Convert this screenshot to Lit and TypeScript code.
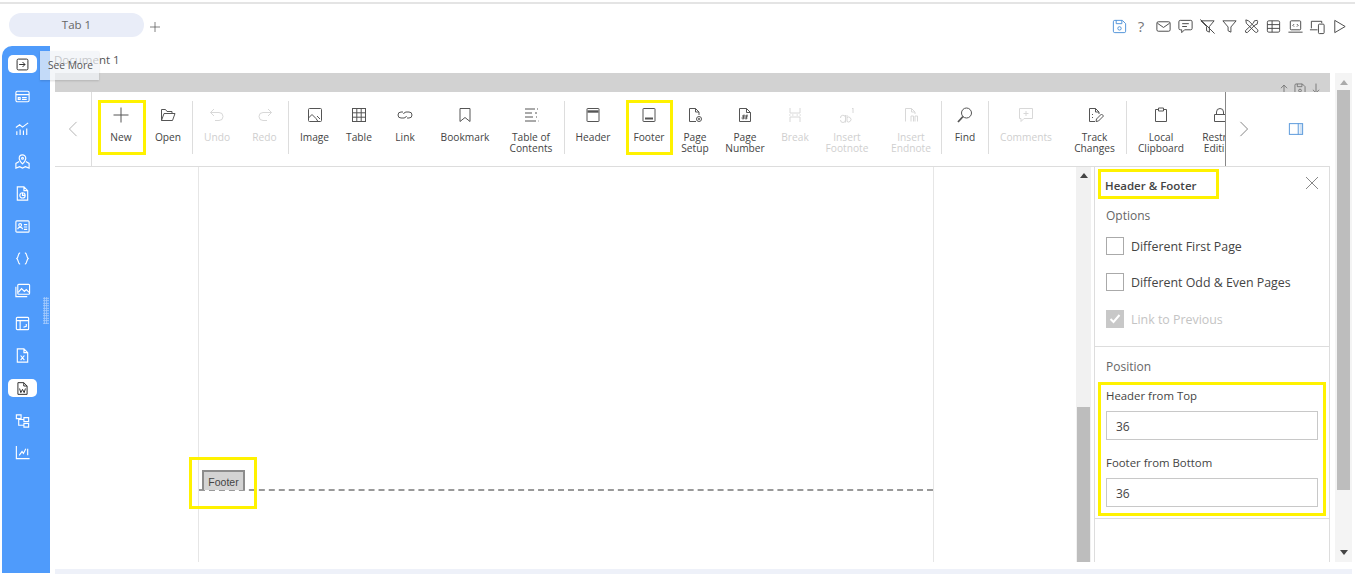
import { LitElement, html, svg, css } from "lit";
import { customElement } from "lit/decorators.js";

// icon bodies, all on an 18x18 box, stroked with currentColor
const icons: Record<string, any> = {
  plus: svg`<path d="M9 1.5v15M1.5 9h15"/>`,
  open: svg`<path d="M2.5 14.5V3.5h4l1.5 2h5v2M2.5 14.5l2.5-7h11l-2.5 7z"/>`,
  undo: svg`<path d="M6 3 2.5 6.5 6 10M2.5 6.5H11a4 4 0 0 1 0 8H7"/>`,
  redo: svg`<path d="M12 3l3.5 3.5L12 10M15.5 6.5H7a4 4 0 0 0 0 8h4"/>`,
  image: svg`<rect x="2.5" y="2.5" width="13" height="13" rx="1"/><path d="M2.5 12 6 8.5l4 4 2 3M11 10l3 3"/>`,
  table: svg`<rect x="2.5" y="2.5" width="13" height="13"/><path d="M2.5 6.8h13M2.5 11.2h13M6.8 2.5v13M11.2 2.5v13"/>`,
  link: svg`<path d="M7 6H5a3 3 0 0 0 0 6h3a3 3 0 0 0 2.5-2M11 12h2a3 3 0 0 0 0-6h-3a3 3 0 0 0-2.5 2"/>`,
  bookmark: svg`<path d="M4 2.5h10v13L9 11.5l-5 4z"/>`,
  toc: svg`<path d="M3 3h10M15 3h1M3 7h7M13 7h2M3 11h8M14 11h1M3 15h11M16 15h.5"/>`,
  header: svg`<rect x="3" y="2.5" width="12" height="13" rx=".5"/><path d="M3.5 5.5h11" stroke-width="2.4"/>`,
  footer: svg`<rect x="3" y="2.5" width="12" height="13" rx=".5"/><path d="M5 12.5h8" stroke-width="2"/>`,
  setup: svg`<path d="M10 15.5H3.5v-13h6l3.5 3.5v3M9.5 2.5V6H13"/><circle cx="13" cy="13" r="2.5"/><circle cx="13" cy="13" r=".7"/>`,
  number: svg`<path d="M3.5 15.5v-13h7l4 4v9zM10.5 2.5v4h4M8 8.5l-1 5M11 8.5l-1 5M6 10h6M5.5 12h6"/>`,
  break: svg`<path d="M4 2v5h10V2M4 16v-5h10v5M3 9h1.5M6 9h1.5M10.500 9H12M13.500 9H15"/>`,
  footnote: svg`<path d="M2.500 14a2.500 2.500 0 1 0 5 0v-2.500a2.500 2.500 0 0 0-5 .5M7.500 9v7.500M9 9v6.500a2.500 2.500 0 1 0 0-4M14 3l1-1v5"/>`,
  endnote: svg`<path d="M3.500 15.500v-13h6l3.500 3.500v2M9.500 2.500V6H13M9 15.500V10h2.500v5.500M13 15.500V10h2.500v5.500"/>`,
  find: svg`<circle cx="10.500" cy="7" r="5"/><path d="M7 10.500 2 16" stroke-width="1.800"/>`,
  comments: svg`<path d="M2.500 2.500h13v10H7l-3 3v-3H2.500zM9 5v5M6.500 7.500h5"/>`,
  track: svg`<path d="M9 15.500H3.500v-13h6L13 6v2M9.500 2.500V6H13M6 8.500h1M6 11.500h1M10 15.500l.500-2.500 5-5 2 2-5 5z"/>`,
  clipboard: svg`<path d="M6 3.500H3.500v12h11v-12H12M6.500 2h5v3h-5z"/>`,
  lock: svg`<path d="M3.500 8.500h11v7h-11zM5.500 8.500V6a3.500 3.500 0 0 1 7 0v2.500"/>`,
  save: svg`<path d="M2.500 4a1.500 1.500 0 0 1 1.500-1.500h8l3.500 3.500v8a1.500 1.500 0 0 1-1.500 1.500H4A1.500 1.500 0 0 1 2.500 14zM5.500 2.500v3.500h6V2.500"/><circle cx="9" cy="11" r="1.800"/>`,
  mail: svg`<rect x="2" y="4" width="14" height="10" rx="1.500"/><path d="m2.500 5.500 6.500 4.500 6.500-4.500"/>`,
  comment: svg`<path d="M3.500 2.500h11a1.500 1.500 0 0 1 1.500 1.500v7a1.500 1.500 0 0 1-1.500 1.500H8l-3 3v-3H3.500A1.500 1.500 0 0 1 2 11V4a1.500 1.500 0 0 1 1.500-1.500zM5.500 6h7M5.500 9h5"/>`,
  filteroff: svg`<path d="M2 3h14l-5 6v6l-3-1.500V9zM1.500 1.500l15 15"/>`,
  filter: svg`<path d="M2 3h14l-5.500 6.500V15L7.500 13.500v-4z"/>`,
  tools: svg`<path d="m3 2 3 1 9.500 9.500a1.800 1.800 0 0 1-2.500 2.500L3.500 5.500zM15 2.500l-3 .5-1 2.500L2.500 13.500a1.800 1.800 0 0 0 2 2L12.500 7.500 15 6.500l.5-3z"/>`,
  grid: svg`<rect x="2.500" y="3" width="13" height="12" rx="1.500"/><path d="M2.500 7h13M2.500 11h13M7.500 3v12"/>`,
  laptop: svg`<rect x="3.500" y="3" width="11" height="9.500" rx="1"/><path d="M1.500 15h15M7.500 6.500l-1.300 1.300 1.300 1.300M10.500 6.500l1.300 1.300-1.300 1.300"/>`,
  devices: svg`<path d="M2.500 11V3.500h11v2M1 12.500h8"/><rect x="10" y="6.500" width="6" height="10" rx="1"/>`,
  play: svg`<path d="M4 2.500 15 9 4 15.500z"/>`,
  close: svg`<path d="M3 3l12 12M15 3 3 15"/>`,
  chevLeft: svg`<path d="M13 1 5 9l8 8"/>`,
  chevRight: svg`<path d="m5 1 8 8-8 8"/>`,
  panel: svg`<rect x="1.500" y="3" width="15" height="12"/><path d="M11.500 3v12"/><path d="M13 3.500h3v11h-3z" fill="currentColor" fill-opacity=".25" stroke="none"/>`,
  upload: svg`<path d="M9 16V4M5 8l4-4 4 4M2 16h14"/>`,
  download: svg`<path d="M9 2v12M5 10l4 4 4-4M2 16h14"/>`,
  // sidebar
  seeMore: svg`<rect x="2.500" y="2.500" width="13" height="13" rx="1.500"/><path d="M5 9h7M9 6l3 3-3 3"/>`,
  card: svg`<rect x="2" y="3.500" width="14" height="11" rx="1.500"/><path d="M2 7h14M4.500 10h2v2h-2zM8.500 10h5M8.500 12h5"/>`,
  chart: svg`<path d="M2 8l4-3 3 2.500L15 3M3 16v-4M6.500 16V10M10 16v-5M13.500 16V9"/>`,
  map: svg`<path d="M5.500 9 2 11v5l4-1.500 3 1.500 3-1.500 4 1.500v-5l-3.500-2"/><path d="M9 11.500S5.500 8 5.500 5.500a3.500 3.500 0 0 1 7 0C12.500 8 9 11.500 9 11.500z"/><circle cx="9" cy="5.500" r="1"/>`,
  docPie: svg`<path d="M3.500 16V2h7l4 4v10zM10.500 2v4h4"/><circle cx="9" cy="11" r="2.800"/><path d="M9 8.200V11h2.800"/>`,
  idCard: svg`<rect x="2" y="3" width="14" height="12" rx="1"/><circle cx="6.500" cy="7.500" r="1.500"/><path d="M4 12c0-3 5-3 5 0M10.500 7h3.500M10.500 9.500h3.500M10.500 12h3.500"/>`,
  braces: svg`<path d="M6.500 3C4 3 5 7.500 3 9c2 1.500 1 6 3.500 6M11.500 3c2.500 0 1.500 4.500 3.500 6-2 1.500-1 6-3.500 6"/>`,
  images: svg`<rect x="4" y="2.500" width="12.500" height="10.500" rx="1"/><path d="M2 5v10.500h12M4.500 11l3.500-4 3 3 2-2 3 3"/>`,
  tableNote: svg`<rect x="2.500" y="2.500" width="13" height="13" rx="1"/><path d="M2.500 6h13M6.500 6v9.500M10 13l3-1V9.500"/>`,
  docX: svg`<path d="M3.500 16V2h7l4 4v10zM10.500 2v4h4M7 9l4 5M11 9l-4 5"/>`,
  docW: svg`<path d="M3.500 16V2h7l4 4v10zM10.500 2v4h4M5.500 9l1.500 5 2-4 2 4 1.500-5"/>`,
  tree: svg`<path d="M2.500 3h5v4h-5zM10.500 6h5v4h-5zM10.500 12h5v4h-5zM5 7v7h5.500M5 8h5.500"/>`,
  lines: svg`<path d="M2.500 2v13.500h14M5.500 12l3-4 1.500 2 2.500-5M14.500 5v7"/>`,
};

const icon = (name: string, size = 18, sw = 1) =>
  html`<svg width=${size} height=${size} viewBox="0 0 18 18" fill="none" stroke="currentColor" stroke-width=${sw}>${icons[name]}</svg>`;

type RibbonItem = { icon?: string; label?: string[]; w?: number; off?: boolean; hl?: string; sep?: boolean };

const ribbon: RibbonItem[] = [
  { icon: "plus", label: ["New"], w: 46, hl: "hl-new" },
  { icon: "open", label: ["Open"], w: 48 },
  { sep: true },
  { icon: "undo", label: ["Undo"], w: 48, off: true },
  { icon: "redo", label: ["Redo"], w: 47, off: true },
  { sep: true },
  { icon: "image", label: ["Image"], w: 51 },
  { icon: "table", label: ["Table"], w: 38 },
  { icon: "link", label: ["Link"], w: 54 },
  { icon: "bookmark", label: ["Bookmark"], w: 66 },
  { icon: "toc", label: ["Table of", "Contents"], w: 66 },
  { sep: true },
  { icon: "header", label: ["Header"], w: 56 },
  { icon: "footer", label: ["Footer"], w: 56, hl: "hl-footer" },
  { icon: "setup", label: ["Page", "Setup"], w: 36 },
  { icon: "number", label: ["Page", "Number"], w: 64 },
  { icon: "break", label: ["Break"], w: 36, off: true },
  { icon: "footnote", label: ["Insert", "Footnote"], w: 68, off: true },
  { icon: "endnote", label: ["Insert", "Endnote"], w: 60, off: true },
  { sep: true },
  { icon: "find", label: ["Find"], w: 46 },
  { sep: true },
  { icon: "comments", label: ["Comments"], w: 74, off: true },
  { icon: "track", label: ["Track", "Changes"], w: 63 },
  { sep: true },
  { icon: "clipboard", label: ["Local", "Clipboard"], w: 68 },
  { icon: "lock", label: ["Restrict", "Editing"], w: 50 },
];

const topIcons = ["save", "help", "mail", "comment", "filteroff", "filter", "tools", "grid", "laptop", "devices", "play"];
const sideIcons = ["seeMore", "card", "chart", "map", "docPie", "idCard", "braces", "images", "tableNote", "docX", "docW", "tree", "lines"];

@customElement("app-root")
export class AppRoot extends LitElement {
  static styles = css`
    :host {
      display: block;
      width: 1355px;
      height: 576px;
      overflow: hidden;
      background: #fff;
      color: #333;
      font-family: "Open Sans", "Noto Sans", sans-serif;
      font-size: 12px;
      position: relative;
    }
    svg { display: block; flex: none; }

    .top-line { height: 2px; margin-top: 2px; background: #e4e4e4; }
    .tabbar { height: 42px; display: flex; align-items: flex-start; padding: 9px 0 0 9px; box-sizing: border-box; }
    .tab {
      width: 135px; height: 24px; border-radius: 12px; background: #e9edf8; color: #666;
      font-size: 11.500px; line-height: 24px; text-align: center; box-sizing: border-box;
    }
    .add { margin: 8px 0 0 5px; color: #444; }
    .top-icons { margin-left: auto; display: flex; padding: 4px 5px 0 0; color: #444; }
    .top-icon { width: 22px; height: 18px; display: grid; place-items: center; font-size: 15px; line-height: 18px; color: #777; }
    .top-icon svg { color: #444; }
    .top-icon.save svg { color: #4a8fd8; }

    .body { display: flex; height: 527px; }
    .sidebar {
      width: 48px; margin-left: 2px; padding: 2px 7px 0 0; box-sizing: border-box; background: #4f9bfb;
      border-radius: 10px 0 0 0; position: relative; color: #fff; flex: none;
    }
    .side-item { height: 32.4px; display: grid; place-items: center; }
    .side-item.on span { width: 29px; height: 18px; background: #fff; border-radius: 5px; color: #333; display: grid; place-items: center; }
    .grip {
      position: absolute; left: 41px; top: 251px; width: 6px; height: 27px;
      background-image: radial-gradient(circle, #a9cdfd 1px, transparent 1.1px);
      background-size: 2.500px 2.500px;
    }
    .tooltip {
      position: absolute; left: 40px; top: 51px; width: 59px; height: 29px; box-sizing: border-box;
      background: rgba(240, 242, 246, .72); box-shadow: 0 1px 2px rgba(0,0,0,.15);
      font-size: 10.200px; line-height: 29px; padding-left: 8px; color: #555; white-space: nowrap; z-index: 2;
    }

    .main { flex: 1; min-width: 0; padding-left: 5px; }
    .doc-title { height: 27px; font-size: 11.500px; line-height: 27px; color: #555; margin-left: -1px; }
    .frame { display: flex; height: 489px; }
    .work { width: 1275px; display: flex; flex-direction: column; flex: none; }
    .grey {
      height: 19px; background: #d2d2d2; display: flex; justify-content: flex-end; gap: 2px;
      padding: 9px 7px 0 0; box-sizing: border-box; overflow: hidden; color: #666;
    }
    .ribbon { height: 75px; display: flex; border-bottom: 1px solid #ddd; box-sizing: border-box; flex: none; }
    .rb-left { width: 37px; border-right: 1px solid #ddd; display: grid; place-items: center; color: #aaa; flex: none; box-sizing: border-box; }
    .rb-items { flex: 1; min-width: 0; display: flex; overflow: hidden; padding: 9px 0 0 6px; box-sizing: border-box; }
    .rb-item {
      flex: none; height: 54px; padding-top: 5px; box-sizing: border-box; position: relative;
      display: flex; flex-direction: column; align-items: center; color: #555;
    }
    .rb-item.off { color: #d8d8d8; }
    .rb-label { margin-top: 8px; font-size: 10.200px; line-height: 11px; text-align: center; color: #444; white-space: nowrap; }
    .rb-item.off .rb-label { color: #cfcfcf; }
    .rb-sep { width: 1px; height: 53px; background: #ddd; flex: none; }
    .hl-new, .hl-footer {
      position: absolute; top: -1px; height: 55px; border: 3px solid #fff200; box-sizing: border-box; pointer-events: none;
    }
    .hl-new { left: 0; width: 48px; }
    .hl-footer { left: 5px; width: 47px; }
    .rb-right { width: 105px; border-left: 1px solid #888; display: flex; align-items: center; flex: none; box-sizing: border-box; }
    .rb-right .next { margin-left: 10px; color: #777; }
    .rb-right .panel { margin-left: 36px; color: #4a8fd8; }

    .split { flex: 1; min-height: 0; display: flex; }
    .canvas { width: 1021px; padding-left: 143px; box-sizing: border-box; display: flex; flex: none; }
    .page {
      width: 736px; box-sizing: border-box; border: solid #e6e6e6; border-width: 0 1px;
      display: flex; flex-direction: column; justify-content: flex-end; padding-bottom: 71px;
    }
    .footer-mark { height: 19px; border-bottom: 2px dashed #999; position: relative; }
    .footer-tag {
      display: block; width: 43px; height: 20px; margin-left: 3px; box-sizing: border-box; background: #d3d3d3;
      border: 2px solid #8c8c8c; border-bottom: 0; font-family: "Liberation Sans", sans-serif; font-size: 10.500px;
      line-height: 20px; text-align: center; color: #444;
    }
    .hl-tag { position: absolute; left: -10px; top: -13px; width: 68px; height: 52px; border: 3px solid #fff200; box-sizing: border-box; }

    .vbar { width: 15px; background: #f1f1f1; margin-right: 3px; position: relative; display: flex; flex-direction: column; flex: none; }
    .vbar .arrow-up { margin: 6px auto 0; }
    .vbar .thumb { margin-top: auto; height: 155px; width: 13px; margin-left: 1px; background: #bdbdbd; }
    .arrow-up { width: 0; height: 0; border: 4px solid transparent; border-top: 0; border-bottom: 5px solid #444; }
    .arrow-down { width: 0; height: 0; border: 4px solid transparent; border-bottom: 0; border-top: 5px solid #444; }

    .side-panel { width: 236px; box-sizing: border-box; border: solid #ddd; border-width: 0 1px; display: flex; flex-direction: column; flex: none; }
    .sec-1 { height: 180px; border-bottom: 1px solid #ddd; box-sizing: border-box; }
    .title-row { display: flex; justify-content: space-between; align-items: flex-start; padding: 2px 8px 0 3px; }
    .title {
      width: 121px; height: 30px; box-sizing: border-box; border: 3px solid #fff200; padding-left: 4px;
      font-size: 11.500px; font-weight: 600; line-height: 28px; color: #444;
    }
    .close { color: #888; margin-top: 5px; }
    .sec-label { font-size: 12px; line-height: 16px; color: #666; padding-left: 11px; }
    .sec-1 .sec-label { margin-top: 9px; margin-bottom: 13px; }
    .check-row { height: 18px; display: flex; align-items: center; gap: 7px; padding-left: 11px; margin-bottom: 18px; font-size: 12.400px; color: #444; }
    .check-row.last { margin-bottom: 0; margin-top: 19px; color: #c4c4c4; }
    .box { width: 18px; height: 18px; box-sizing: border-box; border: 1px solid #aaa; background: #fff; flex: none; }
    .box.done { background: #c8c8c8; border-color: #c8c8c8; color: #fff; display: grid; place-items: center; }
    .sec-2 { padding-top: 12px; height: 172px; box-sizing: border-box; border-bottom: 1px solid #ddd; }
    .fields {
      margin: 7px 0 0 3px; width: 228px; height: 134px; box-sizing: border-box; border: 3px solid #fff200;
      padding: 3px 0 0 5px; color: #444; font-size: 11.400px;
    }
    .field-label { line-height: 16px; height: 16px; color: #444; }
    .field {
      width: 212px; height: 29px; margin: 7px 0 15px; box-sizing: border-box; border: 1px solid #c8c8c8;
      padding-left: 9px; font-size: 12px; line-height: 29px; color: #444;
    }
    .field.second { margin-bottom: 0; }

    .outer-bar { width: 17px; margin-left: 5px; background: #f4f4f4; display: flex; flex-direction: column; align-items: center; flex: none; }
    .outer-bar .arrow-up { margin-top: 7px; border-bottom-color: #aaa; }
    .outer-bar .thumb { width: 13px; height: 400px; margin-top: 5px; background: #bdbdbd; }
    .outer-bar .arrow-down { margin-top: auto; margin-bottom: 7px; }
    .strip { height: 5px; width: 1297px; margin-top: 7px; background: #eef1f9; }
  `;

  renderRibbonItem(it: RibbonItem) {
    if (it.sep) return html`<div class="rb-sep"></div>`;
    return html`<div class="rb-item ${it.off ? "off" : ""}" style="width:${it.w}px">
      ${icon(it.icon!)}
      <div class="rb-label">${it.label!.map((l) => html`<div>${l}</div>`)}</div>
      ${it.hl ? html`<div class=${it.hl}></div>` : ""}
    </div>`;
  }

  render() {
    return html`
      <div class="top-line"></div>
      <div class="tabbar">
        <div class="tab">Tab 1</div>
        <div class="add">${icon("plus", 12)}</div>
        <div class="top-icons">
          ${topIcons.map((n) =>
            n === "help"
              ? html`<div class="top-icon">?</div>`
              : html`<div class="top-icon ${n}">${icon(n, 17)}</div>`
          )}
        </div>
      </div>
      <div class="body">
        <div class="sidebar">
          ${sideIcons.map((n, i) => html`<div class="side-item ${i === 0 || i === 10 ? "on" : ""}">
            <span>${icon(n, i === 0 || i === 10 ? 15 : 17, 1.2)}</span>
          </div>`)}
          <div class="grip"></div>
        </div>
        <div class="main">
          <div class="doc-title">Document 1</div>
          <div class="frame">
            <div class="work">
              <div class="grey">${icon("upload", 14)}${icon("save", 14)}${icon("download", 14)}</div>
              <div class="ribbon">
                <div class="rb-left">${icon("chevLeft", 16)}</div>
                <div class="rb-items">${ribbon.map((it) => this.renderRibbonItem(it))}</div>
                <div class="rb-right">
                  <div class="next">${icon("chevRight", 16)}</div>
                  <div class="panel">${icon("panel", 16)}</div>
                </div>
              </div>
              <div class="split">
                <div class="canvas">
                  <div class="page">
                    <div class="footer-mark">
                      <span class="footer-tag">Footer</span>
                      <div class="hl-tag"></div>
                    </div>
                  </div>
                </div>
                <div class="vbar"><div class="arrow-up"></div><div class="thumb"></div></div>
                <div class="side-panel">
                  <div class="sec-1">
                    <div class="title-row">
                      <div class="title">Header &amp; Footer</div>
                      <div class="close">${icon("close", 18)}</div>
                    </div>
                    <div class="sec-label">Options</div>
                    <div class="check-row"><div class="box"></div>Different First Page</div>
                    <div class="check-row"><div class="box"></div>Different Odd &amp; Even Pages</div>
                    <div class="check-row last">
                      <div class="box done">
                        <svg width="12" height="12" viewBox="0 0 12 12" fill="none" stroke="currentColor" stroke-width="2"><path d="m1.500 6 3 3 6-7"/></svg>
                      </div>
                      Link to Previous
                    </div>
                  </div>
                  <div class="sec-2">
                    <div class="sec-label">Position</div>
                    <div class="fields">
                      <div class="field-label">Header from Top</div>
                      <div class="field">36</div>
                      <div class="field-label">Footer from Bottom</div>
                      <div class="field second">36</div>
                    </div>
                  </div>
                </div>
              </div>
            </div>
            <div class="outer-bar"><div class="arrow-up"></div><div class="thumb"></div><div class="arrow-down"></div></div>
          </div>
          <div class="strip"></div>
        </div>
      </div>
      <div class="tooltip">See More</div>
    `;
  }
}
